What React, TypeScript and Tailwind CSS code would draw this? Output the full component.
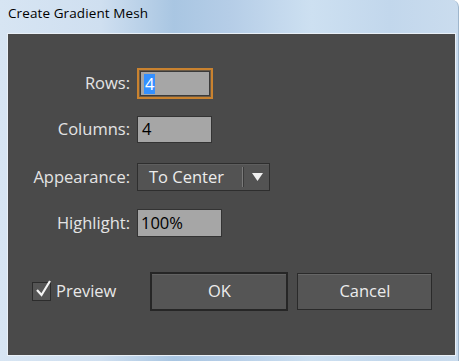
import React from "react";

const font = { fontFamily: '"Open Sans", "Noto Sans", sans-serif' };

function Label({ children }: { children: React.ReactNode }) {
  return (
    <div className="w-[122px] shrink-0 text-right pr-[0px] text-[16.5px] text-[#e4e4e4] leading-none">
      {children}
    </div>
  );
}

export default function App() {
  return (
    <div className="w-[463px] h-[362px] bg-white relative overflow-hidden" style={font}>
      <div className="w-[459px] h-[361px] rounded-tr-[7px] flex flex-col bg-[linear-gradient(90deg,#d7e5f3_0%,#cfdff0_22%,#a9c6e2_38%,#b5cde7_50%,#cde0f1_68%,#c2d7ec_85%,#cadcee_100%)] border-r border-[#9fb6cc]">
        <div className="h-[33px] shrink-0 pl-[8px] pt-[7px] text-[13.5px] text-black leading-none tracking-[0.1px]">
          Create Gradient Mesh
        </div>
        <div className="ml-[7px] mr-[2px] h-[323px] border border-[#e9f0f7] bg-[#4a4a4a] flex flex-col pt-[34px]">
          {/* Rows */}
          <div className="flex items-center h-[31px]">
            <Label>Rows:</Label>
            <div className="ml-[7px] w-[76px] h-[31px] border-2 border-[#c9822f] p-[1px] bg-[#6b5a45]">
              <div className="w-full h-full bg-[#a6a6a6] border border-[#3a3a3a] flex items-center pl-[3px]">
                <span className="bg-[#3390ff] text-white text-[16.5px] leading-[20px] px-[1px]">4</span>
              </div>
            </div>
          </div>
          {/* Columns */}
          <div className="flex items-center h-[27px] mt-[17px]">
            <Label>Columns:</Label>
            <div className="ml-[7px] w-[75px] h-[27px] bg-[#a6a6a6] border border-[#333] flex items-center pl-[4px] text-[16.5px] text-black leading-none">
              4
            </div>
          </div>
          {/* Appearance */}
          <div className="flex items-center h-[28px] mt-[20px]">
            <Label>Appearance:</Label>
            <div className="ml-[7px] w-[133px] h-[28px] bg-[#535353] border border-[#2e2e2e] shadow-[inset_0_1px_0_#5e5e5e] flex items-center text-[16.5px] text-[#ececec] leading-none">
              <span className="pl-[11px] w-[104px]">To Center</span>
              <div className="w-[1px] h-[20px] bg-[#7a7a7a]" />
              <div className="w-[1px] h-[20px] bg-[#3a3a3a]" />
              <svg width="11" height="8" viewBox="0 0 11 8" className="ml-[8px]">
                <path d="M0 0 H11 L5.5 8 Z" fill="#f0f0f0" />
              </svg>
            </div>
          </div>
          {/* Highlight */}
          <div className="flex items-center h-[28px] mt-[18px]">
            <Label>Highlight:</Label>
            <div className="ml-[7px] w-[85px] h-[28px] bg-[#a6a6a6] border border-[#333] flex items-center pl-[3px] text-[16.5px] text-black leading-none">
              100%
            </div>
          </div>
          {/* Bottom */}
          <div className="flex items-center mt-[35px]">
            <div className="ml-[24px] flex items-center">
              <div className="w-[19px] h-[19px] border border-[#2c2c2c] bg-[#555] relative">
                <svg width="20" height="20" viewBox="0 0 20 20" className="absolute left-[1px] top-[-4px]">
                  <path d="M3 11 L7.5 16 L16 2" fill="none" stroke="#f4f4f4" strokeWidth="2.2" />
                </svg>
              </div>
              <span className="ml-[5px] text-[16.5px] text-[#e8e8e8] leading-none">Preview</span>
            </div>
            <div className="ml-[34px] w-[138px] h-[39px] border-2 border-[#262626] bg-[#555] shadow-[inset_0_1px_0_#626262] flex items-center justify-center text-[16.5px] text-[#ececec] leading-none">
              OK
            </div>
            <div className="ml-[9px] w-[135px] h-[37px] border border-[#2a2a2a] bg-[#555] shadow-[inset_0_1px_0_#666] flex items-center justify-center text-[16.5px] text-[#ececec] leading-none">
              Cancel
            </div>
          </div>
        </div>
      </div>
    </div>
  );
}
